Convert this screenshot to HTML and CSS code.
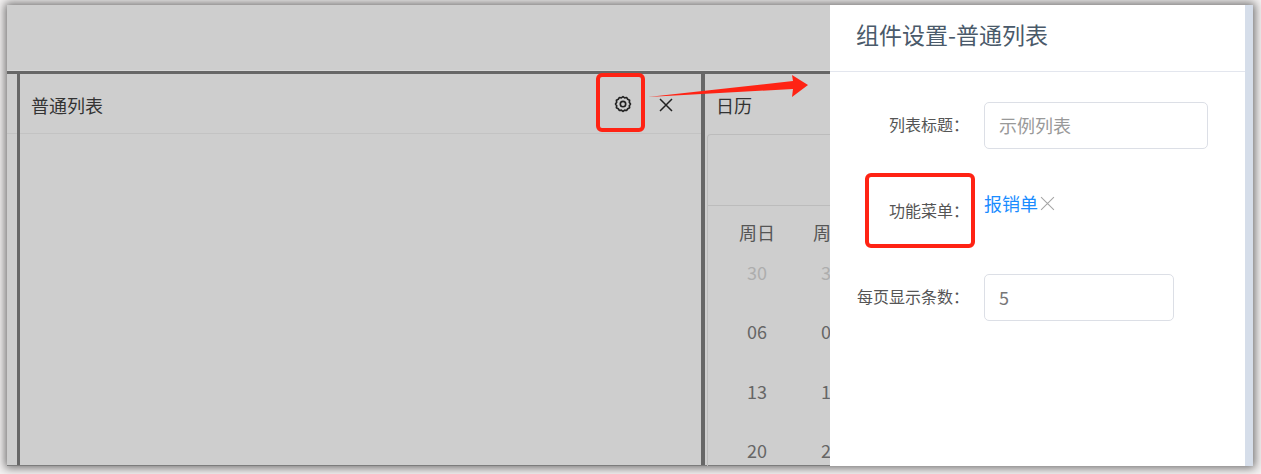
FILE: index.html
```html
<!DOCTYPE html>
<html lang="en">
<head>
    <meta charset="UTF-8">
    <meta name="viewport" content="width=device-width, initial-scale=1.0">
    <title>组件设置</title>
    <link rel="stylesheet" href="styles.css">
</head>
<body>
    <div class="shot">
        <div class="backdrop">
            <div class="topbar"></div>
            <div class="board">
                <div class="widget list-widget">
                    <div class="widget-head">
                        <span>普通列表</span>
                        <div class="widget-actions">
                            <svg class="gear" viewBox="0 0 24 24" fill="none" stroke="currentColor" stroke-width="2.2">
                                <path d="M12 2.2l2.2 1.6 2.8-.4 1.3 2.4 2.5 1.3-.4 2.7L22 12l-1.6 2.2.4 2.7-2.5 1.3-1.3 2.4-2.8-.4L12 21.8l-2.2-1.6-2.8.4-1.3-2.4-2.5-1.3.4-2.7L2 12l1.6-2.2-.4-2.7 2.5-1.3L7 3.4l2.8.4z" stroke-linejoin="round"/>
                                <circle cx="12" cy="12" r="3.6"/>
                            </svg>
                            <svg class="close" viewBox="0 0 14 14" fill="none" stroke="currentColor" stroke-width="1.5">
                                <path d="M1 1l12 12M13 1L1 13"/>
                            </svg>
                        </div>
                    </div>
                </div>
                <div class="widget calendar-widget">
                    <div class="widget-head cal-head"><span>日历</span></div>
                    <div class="cal-card">
                        <div class="cal-top"></div>
                        <div class="cal-grid">
                            <span class="week">周日</span><span class="week">周一</span>
                            <span class="muted">30</span><span class="muted">31</span>
                            <span>06</span><span>07</span>
                            <span>13</span><span>14</span>
                            <span>20</span><span>21</span>
                        </div>
                    </div>
                </div>
            </div>
        </div>
        <div class="drawer">
            <div class="drawer-title">组件设置-普通列表</div>
            <div class="drawer-body">
                <div class="form-row">
                    <label>列表标题：</label>
                    <div class="input wide placeholder">示例列表</div>
                </div>
                <div class="form-row menu-row">
                    <label>功能菜单：</label>
                    <div class="tag">
                        <a>报销单</a>
                        <svg viewBox="0 0 14 14" fill="none" stroke="currentColor" stroke-width="1">
                            <path d="M1 1l12 12M13 1L1 13"/>
                        </svg>
                    </div>
                </div>
                <div class="form-row">
                    <label>每页显示条数：</label>
                    <div class="input narrow">5</div>
                </div>
            </div>
        </div>
        <div class="scroll-strip"></div>

        <!-- red marks drawn on top of the screenshot -->
        <div class="mark mark-gear"></div>
        <div class="mark mark-menu"></div>
        <svg class="arrow" viewBox="0 0 170 30">
            <path d="M0 26L145 10L144 4L160 14L144 26L145 18z" fill="#ff2314"/>
        </svg>
    </div>
</body>
</html>
```

FILE: styles.css
```css
* {
    box-sizing: border-box;
}

html, body {
    height: 100%;
}

body {
    margin: 0;
    padding: 5px 8px 8px 7px;
    overflow: hidden;
    background-color: #f4f2f2;
    font-family: "Noto Sans CJK SC", "Noto Sans", sans-serif;
    color: #333;
}

.shot {
    position: relative;
    display: flex;
    height: 100%;
    box-shadow: 0 0 9px 2px rgba(0, 0, 0, 0.55);
}

.backdrop {
    display: flex;
    flex-direction: column;
    width: 823px;
    overflow: hidden;
    background-color: #cecece;
}

.topbar {
    height: 66px;
    border-bottom: 1px solid #d8d8d8;
}

.board {
    flex: 1;
    display: flex;
    min-height: 0;
    padding-left: 10px;
    border-top: 3px solid #676767;
    border-bottom: 1px solid #7c7c7c;
}

.widget {
    border-left: 3px solid #676767;
}

.list-widget {
    width: 684px;
}

.calendar-widget {
    flex: 1;
    min-width: 0;
    border-left-width: 4px;
}

.widget-head {
    position: relative;
    display: flex;
    align-items: center;
    justify-content: space-between;
    height: 60px;
    padding: 2px 28px 0 11px;
    border-bottom: 1px solid #c3c3c3;
    font-size: 18px;
    color: #333;
}

/* the header rule also runs through the strip left of the first widget */
.list-widget .widget-head::before {
    content: "";
    position: absolute;
    left: -13px;
    bottom: -1px;
    width: 10px;
    border-bottom: 1px solid #c3c3c3;
}

.widget-actions {
    display: flex;
    align-items: center;
    gap: 27px;
}

.gear {
    width: 18px;
    height: 18px;
    margin-top: -1px;
    color: #222;
}

.close {
    width: 14px;
    height: 14px;
    color: #222;
}

.cal-head {
    border-bottom: 0;
}

.cal-card {
    margin-left: 2px;
    border-top: 1px solid #bcbcbc;
    border-left: 1px solid #bcbcbc;
    border-top-left-radius: 4px;
}

.cal-top {
    height: 71px;
    border-bottom: 1px solid #bcbcbc;
}

.cal-grid {
    display: grid;
    grid-template-columns: 74px 74px;
    grid-template-rows: 36.5px;
    grid-auto-rows: 59.5px;
    padding-left: 12px;
    font-size: 18px;
    color: #666;
    text-align: center;
    line-height: 59.5px;
}

.cal-grid .week {
    color: #555;
    line-height: 52px;
}

.cal-grid .muted {
    color: #adadad;
}

.drawer {
    width: 415px;
    background-color: #fff;
}

.drawer-title {
    height: 67px;
    padding-left: 26px;
    border-bottom: 1px solid #e3e6ee;
    font-size: 23px;
    line-height: 58px;
    color: #4a5a6a;
}

.drawer-body {
    padding-top: 30px;
}

.form-row {
    display: flex;
    align-items: center;
    height: 47px;
    margin-bottom: 30px;
}

.form-row label {
    width: 139px;
    padding-bottom: 4px;
    text-align: right;
    font-size: 16px;
    color: #555;
    white-space: nowrap;
}

.input {
    height: 47px;
    margin-left: 15px;
    padding-left: 14px;
    border: 1px solid #dcdfe6;
    border-radius: 5px;
    font-size: 18px;
    line-height: 45px;
    color: #777;
}

.placeholder {
    color: #999;
}

.wide {
    width: 224px;
}

.narrow {
    width: 190px;
}

.menu-row {
    height: 65px;
}

.tag {
    display: flex;
    align-items: center;
    gap: 2px;
    align-self: flex-start;
    margin: 11px 0 0 15px;
    font-size: 18px;
    color: #1a8cff;
}

.tag svg {
    width: 15px;
    height: 15px;
    color: #a6a6a6;
}

.scroll-strip {
    width: 8px;
    background-color: #d6deea;
}

.mark {
    position: absolute;
    border: 4px solid #ff2314;
    border-radius: 6px;
}

.mark-gear {
    left: 589px;
    top: 68px;
    width: 49px;
    height: 59px;
}

.mark-menu {
    left: 858px;
    top: 168px;
    width: 110px;
    height: 75px;
}

.arrow {
    position: absolute;
    left: 641px;
    top: 66px;
    width: 170px;
    height: 30px;
}
```
